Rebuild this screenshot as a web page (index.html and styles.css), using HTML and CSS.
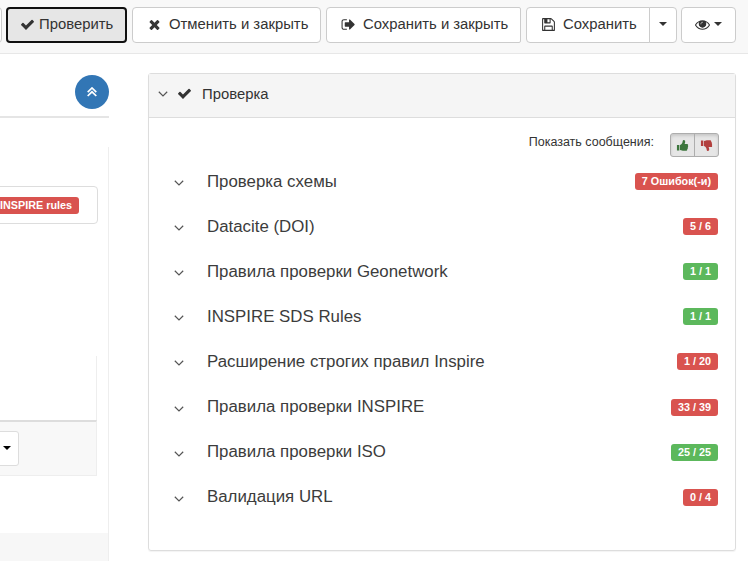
FILE: index.html
```html
<!DOCTYPE html>
<html lang="ru">
<head>
<meta charset="utf-8">
<title>Проверка</title>
<link rel="stylesheet" href="styles.css">
</head>
<body>
<svg class="defs" aria-hidden="true">
<symbol id="check" viewBox="0 0 1792 1792"><path d="M1671 566q0 40-28 68l-724 724-136 136q-28 28-68 28t-68-28l-136-136-362-362q-28-28-28-68t28-68l136-136q28-28 68-28t68 28l294 295 656-657q28-28 68-28t68 28l136 136q28 28 28 68z"/></symbol>
<symbol id="times" viewBox="0 0 1792 1792"><path d="M1490 1322q0 40-28 68l-136 136q-28 28-68 28t-68-28l-294-294-294 294q-28 28-68 28t-68-28l-136-136q-28-28-28-68t28-68l294-294-294-294q-28-28-28-68t28-68l136-136q28-28 68-28t68 28l294 294 294-294q28-28 68-28t68 28l136 136q28 28 28 68t-28 68l-294 294 294 294q28 28 28 68z"/></symbol>
<symbol id="signout" viewBox="0 0 1792 1792"><path d="M704 1440q0 4 1 20t.5 26.5-3 23.5-10 19.5-20.5 6.5h-320q-119 0-203.5-84.5t-84.5-203.5v-704q0-119 84.5-203.5t203.5-84.5h320q13 0 22.5 9.5t9.5 22.5q0 4 1 20t.5 26.5-3 23.5-10 19.5-20.5 6.5h-320q-66 0-113 47t-47 113v704q0 66 47 113t113 47h312l11.5 1 11.5 3 8 5.5 7 9 2 13.5zm928-544q0 26-19 45l-544 544q-19 19-45 19t-45-19-19-45v-288h-448q-26 0-45-19t-19-45v-384q0-26 19-45t45-19h448v-288q0-26 19-45t45-19 45 19l544 544q19 19 19 45z"/></symbol>
<symbol id="floppy" viewBox="0 0 1792 1792"><path d="M512 1536h768v-384h-768v384zm896 0h128v-896q0-14-10-38.500t-20-34.500l-281-281q-10-10-34-20t-39-10v416q0 40-28 68t-68 28h-576q-40 0-68-28t-28-68v-416h-128v1280h128v-416q0-40 28-68t68-28h832q40 0 68 28t28 68v416zm-384-928v-320q0-13-9.500-22.500t-22.500-9.500h-192q-13 0-22.500 9.500t-9.500 22.500v320q0 13 9.500 22.500t22.500 9.500h192q13 0 22.500-9.500t9.500-22.500zm640 32v928q0 40-28 68t-68 28h-1344q-40 0-68-28t-28-68v-1344q0-40 28-68t68-28h928q40 0 88 20t76 48l280 280q28 28 48 76t20 88z"/></symbol>
<symbol id="eye" viewBox="0 0 1792 1792"><path d="M1664 960q-152-236-381-353 61 104 61 225 0 185-131.500 316.500t-316.500 131.500-316.500-131.500-131.500-316.500q0-121 61-225-229 117-381 353 133 205 333.500 326.500t434.500 121.500 434.500-121.500 333.500-326.500zm-720-384q0-20-14-34t-34-14q-125 0-214.500 89.500t-89.500 214.500q0 20 14 34t34 14 34-14 14-34q0-86 61-147t147-61q20 0 34-14t14-34zm848 384q0 34-20 69-140 230-376.500 368.500t-499.500 138.500-499.500-139-376.500-368q-20-35-20-69t20-69q140-229 376.500-368t499.500-139 499.500 139 376.500 368q20 35 20 69z"/><circle cx="896" cy="850" r="370"/><path d="M700 830q0-90 60-145t140-55" fill="none" stroke="#fff" stroke-width="70" stroke-linecap="round"/></symbol>
<symbol id="thumb" viewBox="0 0 14 14"><path d="M1 6.500h2.600v6H1zM4.300 6.500C6 6 6.700 4.500 7 3.500 7.200 2.500 7.200 1 8.300 1c1.500 0 1.900 1.500 1.500 2.800L9.300 5.400h2.600c1.200 0 1.600 1.200.9 2 .5.700.3 1.500-.2 1.900.3.700 0 1.400-.5 1.700.1 1-.4 1.700-1.500 1.700H8.500c-1.700 0-2.500-.7-4.200-.8z"/></symbol>
<symbol id="down" viewBox="0 0 10 6"><path d="M.8.800 5 4.900 9.200.8" fill="none" stroke="currentColor" stroke-width="1.200"/></symbol>
<symbol id="up2" viewBox="0 0 10 10"><path d="M.7 5.200 5 1l4.300 4.200M.7 9 5 4.800 9.300 9" fill="none" stroke="currentColor" stroke-width="1.700"/></symbol>
</svg>

<header class="toolbar">
  <span class="btn stub"></span>
  <button class="btn active"><svg class="fa"><use href="#check"/></svg><span>Проверить</span></button>
  <button class="btn cancel"><svg class="fa"><use href="#times"/></svg><span>Отменить и закрыть</span></button>
  <button class="btn saveclose"><svg class="fa"><use href="#signout"/></svg><span>Сохранить и закрыть</span></button>
  <div class="group">
    <button class="btn save"><svg class="fa"><use href="#floppy"/></svg><span>Сохранить</span></button>
    <button class="btn toggle"><i class="caret"></i></button>
  </div>
  <button class="btn view"><svg class="fa"><use href="#eye"/></svg><i class="caret"></i></button>
</header>

<main class="content">
  <section class="editor">
    <div class="editor-head"><span class="round"><svg><use href="#up2"/></svg></span></div>
    <div class="editor-body">
      <div class="field"><span class="label bad">INSPIRE rules</span></div>
      <div class="box"></div>
      <div class="box-foot"><span class="drop"><i class="caret"></i></span></div>
      <div class="next"></div>
    </div>
  </section>

  <section class="panel">
    <h2 class="panel-head"><svg class="chev"><use href="#down"/></svg><svg class="fa"><use href="#check"/></svg><span>Проверка</span></h2>
    <div class="filter"><span>Показать сообщения:</span>
      <div class="thumbs"><span class="t good-t"><svg><use href="#thumb"/></svg></span><span class="t bad-t"><svg><use href="#thumb"/></svg></span></div>
    </div>
    <ul class="rules">
      <li><svg class="chev"><use href="#down"/></svg><span class="name">Проверка схемы</span><span class="label bad">7 Ошибок(-и)</span></li>
      <li><svg class="chev"><use href="#down"/></svg><span class="name">Datacite (DOI)</span><span class="label bad">5 / 6</span></li>
      <li><svg class="chev"><use href="#down"/></svg><span class="name">Правила проверки Geonetwork</span><span class="label good">1 / 1</span></li>
      <li><svg class="chev"><use href="#down"/></svg><span class="name">INSPIRE SDS Rules</span><span class="label good">1 / 1</span></li>
      <li><svg class="chev"><use href="#down"/></svg><span class="name">Расширение строгих правил Inspire</span><span class="label bad">1 / 20</span></li>
      <li><svg class="chev"><use href="#down"/></svg><span class="name">Правила проверки INSPIRE</span><span class="label bad">33 / 39</span></li>
      <li><svg class="chev"><use href="#down"/></svg><span class="name">Правила проверки ISO</span><span class="label good">25 / 25</span></li>
      <li><svg class="chev"><use href="#down"/></svg><span class="name">Валидация URL</span><span class="label bad">0 / 4</span></li>
    </ul>
  </section>
</main>
</body>
</html>
```
FILE: styles.css
```css
* { box-sizing: border-box; }
body { margin: 0; width: 748px; height: 561px; overflow: hidden; background: #fff; color: #333; font: 14.850px/20px "Liberation Sans", Arial, sans-serif; }
svg { fill: currentColor; display: block; flex: none; }
.defs { width: 0; height: 0; position: absolute; }
.fa { width: 15px; height: 15px; }

.toolbar { height: 54px; background: #f8f8f8; border-bottom: 1px solid #e7e7e7; padding-top: 7px; display: flex; align-items: flex-start; }
.btn { height: 36px; padding: 0 0 2px; border: 1px solid #ccc; border-radius: 4px; background: #fff; color: #333; font: inherit; display: flex; align-items: center; white-space: nowrap; flex: none; }
.stub { width: 12px; margin-left: -10px; margin-right: 4px; }
.active { width: 121px; border: 2px solid #111; background: #e6e6e6; padding-left: 12px; gap: 4px; margin-right: 5px; }
.cancel { width: 189px; padding-left: 14px; gap: 7px; margin-right: 5px; }
.saveclose { width: 195px; padding-left: 14px; gap: 7px; margin-right: 5px; border-radius: 4px 2px 2px 4px; }
.group { display: flex; margin-right: 4px; }
.save { width: 124px; padding-left: 14px; gap: 7px; border-radius: 4px 0 0 4px; }
.toggle { width: 28px; margin-left: -1px; justify-content: center; border-radius: 0 4px 4px 0; }
.view { width: 55px; justify-content: center; gap: 4px; }
.caret { border: 4px solid transparent; border-top-color: currentColor; border-bottom: 0; }

.content { display: flex; align-items: flex-start; }
.editor { width: 149px; height: 507px; flex: none; }
.editor-head { width: 109px; height: 64px; padding-top: 21px; border-bottom: 2px solid #e5e5e5; display: flex; justify-content: flex-end; align-items: flex-start; }
.round { width: 34px; height: 34px; border-radius: 50%; background: #3276b5; color: #fff; display: flex; align-items: center; justify-content: center; }
.round svg { width: 10px; height: 10px; }
.editor-body { width: 109px; height: 414px; margin-top: 29px; border-right: 1px solid #eee; padding-top: 39px; }
.field { width: 107px; height: 38px; margin-left: -9px; border: 1px solid #ddd; border-radius: 4px; display: flex; align-items: center; justify-content: flex-end; padding-right: 18px; }
.box { width: 97px; height: 64px; margin-top: 132px; border-right: 1px solid #eee; }
.box-foot { width: 97px; height: 56px; background: #f8f8f8; border: 1px solid #eee; border-left: 0; border-top: 2px solid #ddd; padding-top: 9px; }
.drop { width: 28px; height: 35px; margin-left: -9px; border: 1px solid #ddd; border-radius: 3px; background: #fff; display: flex; align-items: center; justify-content: flex-end; padding: 0 7px 2px 0; color: #000; }
.next { width: 108px; height: 28px; margin-top: 57px; background: #f7f7f7; }

.panel { width: 588px; height: 478px; margin: 19px 0 0 -1px; border: 1px solid #ddd; border-radius: 3px; box-shadow: 0 1px 1px rgba(0,0,0,.05); }
.panel-head { height: 44px; margin: 0; padding: 0 0 4px 9px; display: flex; align-items: center; background: #f5f5f5; border-bottom: 1px solid #ddd; font-size: 14.850px; font-weight: 400; }
.panel-head .fa { margin: 0 10px 0 9px; }
.chev { width: 10px; height: 6px; color: #555; }
.filter { height: 38px; margin-top: 3px; padding: 12px 16px 0 0; display: flex; justify-content: flex-end; align-items: flex-start; font-size: 12.500px; line-height: 18px; }
.thumbs { width: 49px; height: 24px; margin-left: 16px; display: flex; border: 1px solid #adadad; border-radius: 3px; background: #e6e6e6; box-shadow: inset 0 2px 3px rgba(0,0,0,.13); }
.t { flex: 1; display: flex; align-items: center; justify-content: center; }
.t svg { width: 13px; height: 13px; }
.good-t { color: #3c763d; }
.bad-t { color: #b23f3d; border-left: 1px solid #adadad; }
.bad-t svg { transform: scale(-1); }
.bad-t svg { transform: scaleY(-1); }
.rules { list-style: none; margin: 0; padding: 0 17px 0 25px; }
.rules li { height: 45.100px; display: flex; align-items: center; font-size: 16.850px; color: #3c3c3c; }
.rules .chev { margin: 3px 23px 0 0; }
.name { flex: 1; }
.label { height: 17px; padding: 0 7px; border-radius: 3px; color: #fff; font-size: 10.800px; font-weight: 700; line-height: 16px; white-space: nowrap; }
.bad { background: #d9534f; }
.good { background: #5cb85c; }
```
